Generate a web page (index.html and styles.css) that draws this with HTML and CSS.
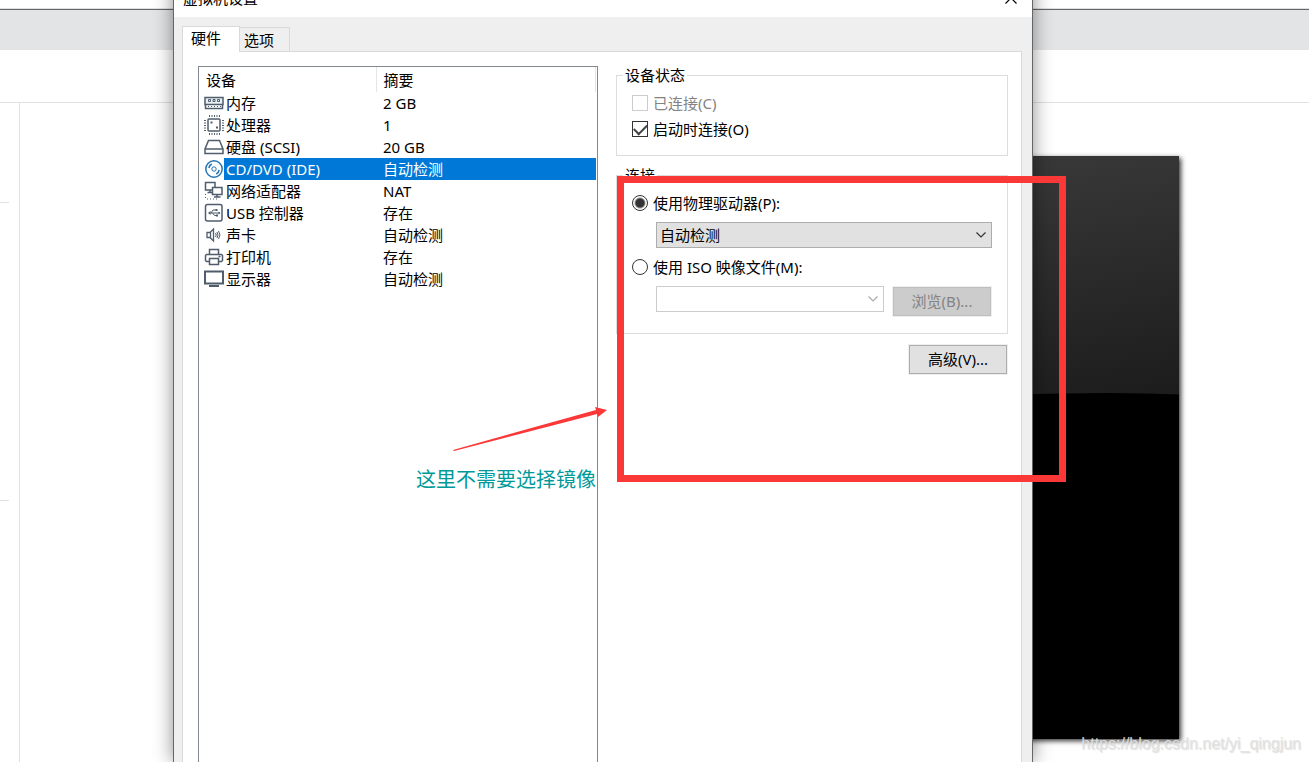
FILE: index.html
```html
<!DOCTYPE html>
<html lang="zh-CN">
<head>
    <meta charset="UTF-8">
    <meta name="viewport" content="width=device-width, initial-scale=1.0">
    <title>虚拟机设置</title>
    <link rel="stylesheet" href="styles.css">
</head>
<body>

    <div class="workspace">
        <div class="menu-strip"></div>
        <div class="tab-strip"></div>
        <div class="tool-strip"></div>
        <div class="work-area">
            <div class="sidebar">
                <hr>
                <hr>
            </div>
            <div class="vm-view">
                <div class="vm-screen">
                    <svg width="240" height="348" viewBox="0 0 240 348">
                        <path d="M0 8Q80 2 171 2Q206 2 240 3.500V348H0Z" fill="#000"/>
                    </svg>
                </div>
            </div>
        </div>
    </div>

    <div class="dialog">
        <div class="title-bar">
            <span>虚拟机设置</span>
            <button type="button" class="close" aria-label="关闭">
                <svg width="12" height="12" viewBox="0 0 12 12"><path d="M.5 .5l11 11M11.5 .5l-11 11" stroke="#000" stroke-width="1.2"/></svg>
            </button>
        </div>

        <div class="tabs">
            <button type="button" class="tab active">硬件</button>
            <button type="button" class="tab">选项</button>
        </div>

        <div class="panel">
            <div class="device-list">
                <table>
                    <thead>
                        <tr><th class="device">设备</th><th>摘要</th></tr>
                    </thead>
                    <tbody>
                        <tr>
                            <td class="device"><div><svg class="icon" viewBox="0 0 20 20"><path d="M1 4.500h18v7H1z" fill="#e8eef2"/><path d="M1.500 11.500v4h17v-4"/><path d="M4.500 6.500h2v2h-2zM9 6.500h2v2H9zM13.500 6.500h2v2h-2z" stroke-width="1"/><path d="M4 13.500h13" stroke-width="1" stroke-dasharray="1 2"/></svg><span>内存</span></div></td>
                            <td>2 GB</td>
                        </tr>
                        <tr>
                            <td class="device"><div><svg class="icon" viewBox="0 0 20 20"><rect x="4" y="4" width="12" height="12" rx="1"/><path d="M5 1h11M5 19h11" stroke-width="2" stroke-dasharray="1 1.500"/><path d="M1 5v11M19 5v11" stroke-width="2" stroke-dasharray="1 1.500"/><path d="M6.500 6.500h2v2h-2zM12 11.500h2v2h-2z" fill="#4f5d6c" stroke="none"/></svg><span>处理器</span></div></td>
                            <td>1</td>
                        </tr>
                        <tr>
                            <td class="device"><div><svg class="icon" viewBox="0 0 20 20"><path d="M4.500 3.500h11L19 12v4.500H1V12zM1 12h18"/></svg><span>硬盘 (SCSI)</span></div></td>
                            <td>20 GB</td>
                        </tr>
                        <tr class="selected">
                            <td class="device"><div><svg class="icon disc" viewBox="0 0 20 20"><circle cx="10" cy="10" r="8.200"/><circle cx="10" cy="10" r="2.200" stroke-width="1"/><path d="M4.800 9a5.500 5.500 0 0 1 3-4M15.200 11a5.500 5.500 0 0 1-3 4" stroke-width="1.500"/></svg><span>CD/DVD (IDE)</span></div></td>
                            <td>自动检测</td>
                        </tr>
                        <tr>
                            <td class="device"><div><svg class="icon" viewBox="0 0 20 20"><path d="M1.500 1.500h9.500v7.500H1.500zM3.500 11.500h5M6 9v2.500"/><path d="M8.500 6.500h9.500v7H8.500z" fill="#fff"/><path d="M13 13.500v2M10 16h6.500"/><path d="M1.500 13v5M3 18h10" stroke-width="1" stroke-dasharray="1 2"/></svg><span>网络适配器</span></div></td>
                            <td>NAT</td>
                        </tr>
                        <tr>
                            <td class="device"><div><svg class="icon" viewBox="0 0 20 20"><rect x="1.500" y="1.500" width="16.500" height="16.500" rx="2"/><path d="M5 10h11M7 10l2-3h3M8.500 10l2 2.500h2.500" stroke-width="1"/><path d="M4 10l2.500-2v4zM14.500 8.500l2 1.500-2 1.500zM11.500 6h2v2h-2zM12 11.500h2v2h-2z" fill="#4f5d6c" stroke="none"/></svg><span>USB 控制器</span></div></td>
                            <td>存在</td>
                        </tr>
                        <tr>
                            <td class="device"><div><svg class="icon" viewBox="0 0 20 20"><path d="M3 7.500h3l3.500-3.500v12L6 12.500H3zM6.500 7.500v5" stroke-width="1.300"/><path d="M11.500 8q1.500 2 0 4M13 7q2 3 0 6M14.500 6q3 4 0 8" stroke-width="1"/></svg><span>声卡</span></div></td>
                            <td>自动检测</td>
                        </tr>
                        <tr>
                            <td class="device"><div><svg class="icon" viewBox="0 0 20 20"><path d="M5.500 7.500V2.500h9v5"/><path d="M5 14.500H2.500l-1-1V8.500l1-1h15l1 1v5l-1 1H15"/><path d="M5.500 11.500h9v6h-9zM14.500 9.500h2"/></svg><span>打印机</span></div></td>
                            <td>存在</td>
                        </tr>
                        <tr>
                            <td class="device"><div><svg class="icon" viewBox="0 0 20 20"><path d="M1 2.500h18v12H1z" stroke-width="2"/><path d="M5 17h10" stroke-width="2"/></svg><span>显示器</span></div></td>
                            <td>自动检测</td>
                        </tr>
                    </tbody>
                </table>
            </div>

            <form class="settings">
                <fieldset class="status">
                    <legend>设备状态</legend>
                    <label class="option disabled"><input type="checkbox" disabled>已连接(C)</label>
                    <label class="option"><input type="checkbox" checked>启动时连接(O)</label>
                </fieldset>

                <fieldset class="connection">
                    <legend>连接</legend>
                    <label class="option"><input type="radio" name="source" checked>使用物理驱动器(P):</label>
                    <div class="row">
                        <select aria-label="物理驱动器">
                            <option>自动检测</option>
                        </select>
                    </div>
                    <label class="option"><input type="radio" name="source">使用 ISO 映像文件(M):</label>
                    <div class="row">
                        <select aria-label="ISO 映像文件" disabled>
                            <option></option>
                        </select>
                        <button type="button" class="btn" disabled>浏览(B)...</button>
                    </div>
                </fieldset>

                <button type="button" class="btn advanced">高级(V)...</button>
            </form>
        </div>
    </div>

    <!-- notes drawn over the window -->
    <div class="mark-box"></div>
    <svg class="mark-arrow" width="156" height="46" viewBox="0 0 156 46">
        <path d="M0 44L143 4L142 1L154 4L145 11L144 8L1 45Z" fill="#fb3838"/>
    </svg>
    <p class="mark-text">这里不需要选择镜像</p>
    <p class="watermark">https://blog.csdn.net/yi_qingjun</p>

</body>
</html>
```
FILE: styles.css
```css
* {
    box-sizing: border-box;
}
body {
    margin: 0;
    height: 100vh;
    position: relative;
    overflow: hidden;
    background-color: #fff;
    color: #000;
    font-family: "Noto Sans", "Noto Sans CJK SC", sans-serif;
    font-size: 15px;
    line-height: 22px;
}
button, select, input {
    font: inherit;
    color: inherit;
    margin: 0;
}

/* main window behind the dialog */
.workspace {
    display: flex;
    flex-direction: column;
    height: 100%;
}
.menu-strip {
    flex: none;
    height: 10px;
    border-bottom: 1px solid #666;
    box-shadow: inset 0 -1px #e0e0e0;
}
.tab-strip {
    flex: none;
    height: 40px;
    background-color: #e3e4e6;
}
.tool-strip {
    flex: none;
    height: 53px;
    border-bottom: 1px solid #e1e1e1;
}
.work-area {
    display: flex;
    flex: 1;
    min-height: 0;
}
.sidebar {
    width: 20px;
    border-right: 1px solid #e1e1e1;
    padding-top: 99px;
}
.sidebar hr {
    width: 9px;
    margin: 0 0 297px;
    border: 0;
    border-top: 1px solid #e1e1e1;
}
.sidebar hr:last-child {
    margin-bottom: 0;
}
.vm-view {
    flex: 1;
    display: flex;
    justify-content: flex-end;
    padding: 53px 130px 23px 0;
}
.vm-screen {
    display: flex;
    align-items: flex-end;
    width: 240px;
    overflow: hidden;
    background: linear-gradient(170deg, #3a3a3a, #1c1c1c 45%);
    box-shadow: 2px 2px 5px rgba(0, 0, 0, 0.8);
}
.vm-screen svg {
    display: block;
}

/* settings dialog */
.dialog {
    position: absolute;
    top: -21px;
    bottom: 0;
    left: 173px;
    right: 276px;
    display: flex;
    flex-direction: column;
    border: 1px solid #666;
    border-bottom: 0;
    background-color: #efefef;
    box-shadow: 0 0 18px rgba(0, 0, 0, 0.45);
}
.title-bar {
    display: flex;
    align-items: center;
    justify-content: space-between;
    height: 37px;
    padding: 0 15px 2px 9px;
    background-color: #fff;
}
.close {
    display: flex;
    padding: 0;
    border: 0;
    background: none;
}
.tabs {
    display: flex;
    align-items: flex-end;
    padding: 9px 8px 0;
}
.tab {
    height: 24px;
    padding: 0 15px 0 4px;
    border: 1px solid #d9d9d9;
    border-width: 1px 1px 0 0;
    background-color: #efefef;
}
.tab.active {
    position: relative;
    height: 26px;
    width: 58px;
    padding: 0 18px 4px 8px;
    margin-bottom: -1px;
    border-left-width: 1px;
    background-color: #fff;
}
.panel {
    flex: 1;
    display: flex;
    gap: 18px;
    margin: 0 10px 0 8px;
    padding: 14px 13px 0 15px;
    border: 1px solid #d9d9d9;
    border-bottom: 0;
    background-color: #fff;
}

/* device list */
.device-list {
    width: 400px;
    padding-right: 1px;
    border: 1px solid #828790;
    border-bottom: 0;
}
table {
    width: 100%;
    table-layout: fixed;
    border-collapse: collapse;
}
th, td {
    height: 22px;
    padding: 0 0 0 7px;
    font-weight: normal;
    text-align: left;
}
th {
    height: 25px;
    border-right: 1px solid #e5e5e5;
}
.device {
    width: 177px;
}
td.device {
    padding-left: 5px;
}
.device div {
    display: flex;
    align-items: center;
}
.device span {
    flex: 1;
    padding-left: 2px;
}
.icon {
    width: 20px;
    height: 20px;
    fill: none;
    stroke: #4f5d6c;
    stroke-width: 1.5;
}
.icon.disc {
    stroke: #2475b5;
}
.selected td {
    background-color: #0078d7;
    color: #fff;
}
.selected td.device {
    background: none;
}
.selected span {
    background-color: #0078d7;
}

/* right side */
.settings {
    flex: 1;
    display: flex;
    flex-direction: column;
}
fieldset {
    min-width: 0;
    margin: 0;
    padding: 6px 15px 0;
    border: 1px solid #dcdcdc;
}
legend {
    margin-left: -9px;
    padding: 0 2px;
    line-height: 18px;
}
.status {
    height: 90px;
    margin-bottom: 10px;
}
.connection {
    height: 168px;
    margin-bottom: 10px;
}
.option {
    display: flex;
    align-items: center;
    gap: 5px;
    height: 26px;
}
.option.disabled {
    color: #838383;
}
.option input {
    appearance: none;
    width: 16px;
    height: 16px;
    border: 1px solid #333;
    background-color: #fff;
}
.option input:disabled {
    border-color: #ccc;
}
.option input[type="checkbox"]:checked {
    display: grid;
    place-items: center;
}
.option input[type="checkbox"]:checked::before {
    content: "";
    width: 11px;
    height: 6px;
    margin-bottom: 3px;
    border: solid #444;
    border-width: 0 0 2px 2px;
    transform: rotate(-45deg);
}
.option input[type="radio"] {
    border-radius: 50%;
}
.option input[type="radio"]:checked {
    background: radial-gradient(circle, #333 4px, #fff 6px);
}
.row {
    display: flex;
    align-items: flex-start;
    gap: 8px;
    padding: 6px 0 6px 24px;
}
select {
    appearance: none;
    flex: 1;
    min-width: 0;
    height: 26px;
    padding: 0 3px;
    border: 1px solid #adadad;
    border-radius: 0;
    background: #e1e1e1 url("data:image/svg+xml,%3Csvg xmlns='http://www.w3.org/2000/svg' width='10' height='6'%3E%3Cpath d='M.5 .5L5 5L9.5 .5' fill='none' stroke='%23333' stroke-width='1.2'/%3E%3C/svg%3E") no-repeat right 5px center;
}
select:disabled {
    border-color: #ccc;
    background-color: #fff;
    background-image: url("data:image/svg+xml,%3Csvg xmlns='http://www.w3.org/2000/svg' width='10' height='6'%3E%3Cpath d='M.5 .5L5 5L9.5 .5' fill='none' stroke='%23aaa' stroke-width='1.2'/%3E%3C/svg%3E");
    opacity: 1;
}
.btn {
    width: 98px;
    height: 29px;
    margin: 1px;
    padding: 0 0 2px;
    border: 1px solid #adadad;
    outline: 1px solid #efefef;
    background-color: #e1e1e1;
}
.btn:disabled {
    border-color: #bfbfbf;
    background-color: #ccc;
    color: #838383;
}
.advanced {
    align-self: flex-end;
}

/* notes */
.mark-box {
    position: absolute;
    top: 176px;
    left: 617px;
    width: 449px;
    height: 306px;
    border: 7px solid #fb3838;
}
.mark-arrow {
    position: absolute;
    top: 406px;
    left: 453px;
}
.mark-text {
    position: absolute;
    top: 467px;
    left: 416px;
    margin: 0;
    color: #009999;
    font-size: 20px;
    line-height: 26px;
}
.watermark {
    position: absolute;
    right: 8px;
    bottom: 8px;
    margin: 0;
    color: rgba(225, 225, 225, 0.9);
    font-family: "Liberation Sans", sans-serif;
    font-size: 16px;
    line-height: 20px;
    text-shadow: 1px 1px 1px rgba(170, 170, 170, 0.4);
}
```
